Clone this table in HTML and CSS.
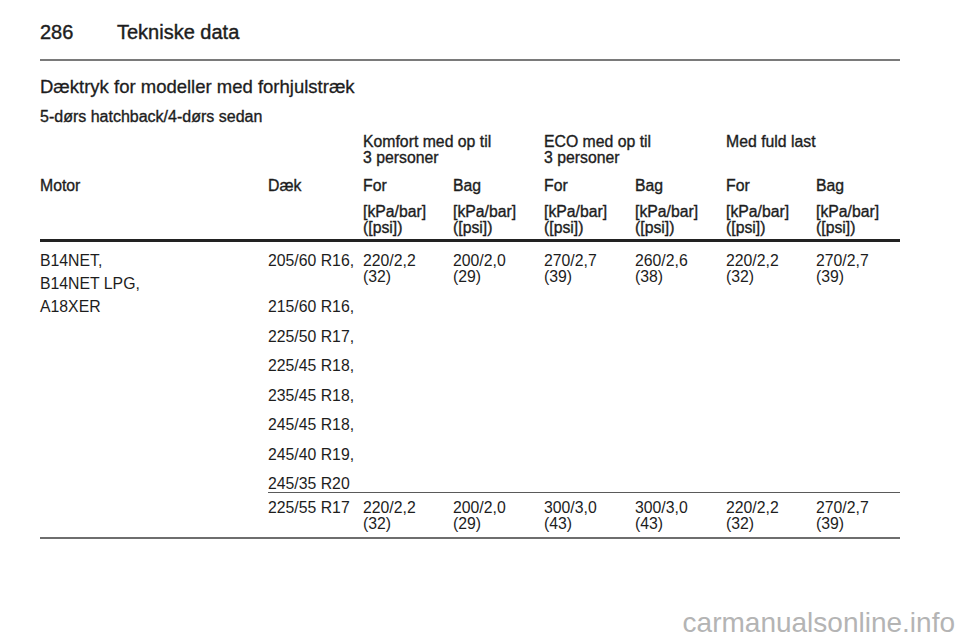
FILE: index.html
```html
<!DOCTYPE html>
<html lang="da">
<head>
    <meta charset="UTF-8">
    <meta name="viewport" content="width=device-width, initial-scale=1.0">
    <title>Tekniske data</title>
    <link rel="stylesheet" href="styles.css">
</head>
<body>
    <div class="page">
        <!-- Sidehoved -->
        <header class="page-head">
            <span class="page-num">286</span>
            <span class="page-title">Tekniske data</span>
        </header>

        <h2>Dæktryk for modeller med forhjulstræk</h2>
        <h3>5-dørs hatchback/4-dørs sedan</h3>

        <table class="tyres">
            <colgroup>
                <col class="c-motor">
                <col class="c-tyre">
                <col class="c-a">
                <col class="c-b">
                <col class="c-b">
                <col class="c-b">
                <col class="c-a">
                <col class="c-last">
            </colgroup>
            <thead>
                <tr class="groups">
                    <th></th>
                    <th></th>
                    <th colspan="2">Komfort med op til<br>3 personer</th>
                    <th colspan="2">ECO med op til<br>3 personer</th>
                    <th colspan="2">Med fuld last</th>
                </tr>
                <tr class="names">
                    <th>Motor</th>
                    <th>Dæk</th>
                    <th>For</th>
                    <th>Bag</th>
                    <th>For</th>
                    <th>Bag</th>
                    <th>For</th>
                    <th>Bag</th>
                </tr>
                <tr class="units">
                    <th></th>
                    <th></th>
                    <th>[kPa/bar]<br>([psi])</th>
                    <th>[kPa/bar]<br>([psi])</th>
                    <th>[kPa/bar]<br>([psi])</th>
                    <th>[kPa/bar]<br>([psi])</th>
                    <th>[kPa/bar]<br>([psi])</th>
                    <th>[kPa/bar]<br>([psi])</th>
                </tr>
            </thead>
            <tbody>
                <tr class="first">
                    <td class="motor" rowspan="9">
                        <p>B14NET,</p>
                        <p>B14NET LPG,</p>
                        <p>A18XER</p>
                    </td>
                    <td>205/60 R16,</td>
                    <td>220/2,2<br>(32)</td>
                    <td>200/2,0<br>(29)</td>
                    <td>270/2,7<br>(39)</td>
                    <td>260/2,6<br>(38)</td>
                    <td>220/2,2<br>(32)</td>
                    <td>270/2,7<br>(39)</td>
                </tr>
                <tr><td>215/60 R16,</td><td colspan="6"></td></tr>
                <tr><td>225/50 R17,</td><td colspan="6"></td></tr>
                <tr><td>225/45 R18,</td><td colspan="6"></td></tr>
                <tr><td>235/45 R18,</td><td colspan="6"></td></tr>
                <tr><td>245/45 R18,</td><td colspan="6"></td></tr>
                <tr><td>245/40 R19,</td><td colspan="6"></td></tr>
                <tr class="end"><td>245/35 R20</td><td colspan="6"></td></tr>
                <tr class="last">
                    <td>225/55 R17</td>
                    <td>220/2,2<br>(32)</td>
                    <td>200/2,0<br>(29)</td>
                    <td>300/3,0<br>(43)</td>
                    <td>300/3,0<br>(43)</td>
                    <td>220/2,2<br>(32)</td>
                    <td>270/2,7<br>(39)</td>
                </tr>
            </tbody>
        </table>
    </div>

    <div class="watermark">carmanualsonline.info</div>
</body>
</html>
```

FILE: styles.css
```css
body {
    margin: 0;
    background-color: #ffffff;
    color: #1d1d1d;
    font-family: "Liberation Sans", Arial, sans-serif;
}

.page {
    width: 860px;
    padding: 20px 60px 0 40px;
}

/* Sidehoved */
.page-head {
    display: flex;
    font-size: 20px;
    line-height: 24px;
    padding-bottom: 15px;
    border-bottom: 2px solid #7a7a7a;
    -webkit-text-stroke: 0.4px #1d1d1d;
}

.page-num {
    width: 77px;
}

h2 {
    margin: 16px 0 0;
    font-size: 18.5px;
    line-height: 20px;
    font-weight: normal;
    -webkit-text-stroke: 0.3px #1d1d1d;
}

h3 {
    margin: 12px 0 0;
    font-size: 16px;
    line-height: 16px;
    font-weight: normal;
    -webkit-text-stroke: 0.35px #1d1d1d;
}

/* Tabel */
.tyres {
    width: 860px;
    margin-top: 9px;
    table-layout: fixed;
    border-collapse: separate;
    border-spacing: 0;
    font-size: 15.8px;
    line-height: 16px;
}

.c-motor { width: 228px; }
.c-tyre { width: 95px; }
.c-a { width: 90px; }
.c-b { width: 91px; }
.c-last { width: 84px; }

.tyres th,
.tyres td {
    padding: 0;
    text-align: left;
    vertical-align: top;
    white-space: nowrap;
}

.tyres th {
    font-weight: normal;
    -webkit-text-stroke: 0.35px #1d1d1d;
}

.groups th {
    padding-bottom: 12px;
}

.names th {
    padding-bottom: 10px;
}

.units th {
    padding-bottom: 3px;
    border-bottom: 3px solid #222222;
}

.tyres td {
    padding-bottom: 13.5px;
}

.tyres tr.first td {
    padding-top: 11px;
    padding-bottom: 14px;
}

.tyres td.motor {
    padding: 11px 0 0;
    border-bottom: 2px solid #6e6e6e;
}

.motor p {
    margin: 0 0 7px;
}

.tyres tr.end td {
    padding-bottom: 0;
}

.tyres tr.last td {
    padding-top: 7px;
    padding-bottom: 5px;
    border-top: 1px solid #5a5a5a;
    border-bottom: 2px solid #6e6e6e;
}

/* Vandmærke */
.watermark {
    position: absolute;
    right: 5px;
    bottom: 3px;
    font-size: 28px;
    line-height: 32px;
    color: #b4b4b4;
}
```
